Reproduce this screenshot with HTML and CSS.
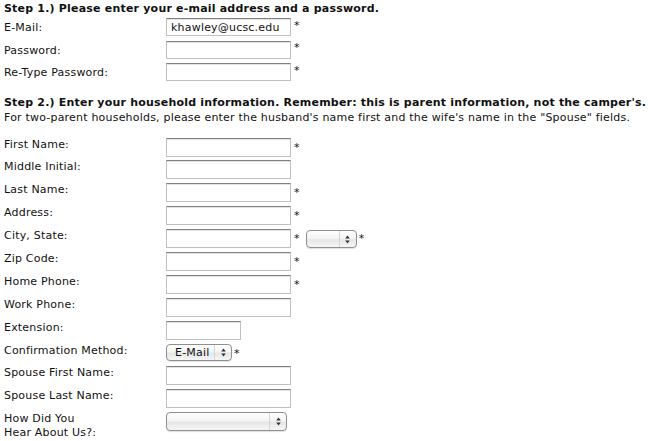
FILE: index.html
```html
<!DOCTYPE html>
<html>
<head>
<meta charset="utf-8">
<link rel="stylesheet" href="styles.css">
</head>
<body>
<form class="form">
  <div class="step1">
    <h2 class="heading">Step 1.) Please enter your e-mail address and a password.</h2>
    <div class="row1"><span class="label">E-Mail:</span><span class="field"><input class="text" type="text" value="khawley@ucsc.edu"></span><span class="req">*</span></div>
    <div class="row1"><span class="label">Password:</span><span class="field"><input class="text" type="password"></span><span class="req">*</span></div>
    <div class="row1"><span class="label">Re-Type Password:</span><span class="field"><input class="text" type="password"></span><span class="req">*</span></div>
  </div>
  <div class="step2">
    <h2 class="heading">Step 2.) Enter your household information. Remember: this is parent information, not the camper's.</h2>
    <p class="note">For two-parent households, please enter the husband's name first and the wife's name in the "Spouse" fields.</p>
    <div class="rows">
      <div class="row2"><span class="label">First Name:</span><input class="text t2" type="text"><span class="req">*</span></div>
      <div class="row2"><span class="label">Middle Initial:</span><input class="text t2" type="text"></div>
      <div class="row2"><span class="label">Last Name:</span><input class="text t2" type="text"><span class="req">*</span></div>
      <div class="row2"><span class="label">Address:</span><input class="text t2" type="text"><span class="req">*</span></div>
      <div class="row2"><span class="label">City, State:</span><input class="text t2" type="text"><span class="req">*</span>
        <span class="select state"><span class="sel-text"></span><span class="sel-arrows"><svg width="5" height="9" viewBox="0 0 5 9"><path d="M2.5 0.5 L4.8 3.5 L0.2 3.5 Z M2.5 8.5 L4.8 5.5 L0.2 5.5 Z" fill="#333"/></svg></span></span><span class="req req-after">*</span></div>
      <div class="row2"><span class="label">Zip Code:</span><input class="text t2" type="text"><span class="req">*</span></div>
      <div class="row2"><span class="label">Home Phone:</span><input class="text t2" type="text"><span class="req">*</span></div>
      <div class="row2"><span class="label">Work Phone:</span><input class="text t2" type="text"></div>
      <div class="row2"><span class="label">Extension:</span><input class="text t2 short" type="text"></div>
      <div class="row2"><span class="label">Confirmation Method:</span>
        <span class="select confirm"><span class="sel-text">E-Mail</span><span class="sel-arrows"><svg width="5" height="9" viewBox="0 0 5 9"><path d="M2.5 0.5 L4.8 3.5 L0.2 3.5 Z M2.5 8.5 L4.8 5.5 L0.2 5.5 Z" fill="#333"/></svg></span></span><span class="req req-after">*</span></div>
      <div class="row2"><span class="label">Spouse First Name:</span><input class="text t2" type="text"></div>
      <div class="row2"><span class="label">Spouse Last Name:</span><input class="text t2" type="text"></div>
      <div class="row2 row-last"><span class="label">How Did You<br>Hear About Us?:</span>
        <span class="select hear"><span class="sel-text"></span><span class="sel-arrows"><svg width="5" height="9" viewBox="0 0 5 9"><path d="M2.5 0.5 L4.8 3.5 L0.2 3.5 Z M2.5 8.5 L4.8 5.5 L0.2 5.5 Z" fill="#333"/></svg></span></span></div>
    </div>
  </div>
</form>
</body>
</html>
```
FILE: styles.css
```css
html, body {
  margin: 0;
  padding: 0;
  background: #fff;
}
body {
  font-family: "DejaVu Sans", Verdana, sans-serif;
  font-size: 11px;
  line-height: 14px;
  letter-spacing: 0.2px;
  color: #111;
}
.form {
  padding: 1px 4px 12px 4px;
}
.heading {
  margin: 0;
  font-size: 11px;
  line-height: 14px;
  font-weight: bold;
}
.step1 .heading {
  margin-top: 1px;
}
.row1 {
  display: flex;
  align-items: center;
  height: 22.5px;
}
.label {
  width: 162px;
  flex: none;
}
.row1 .label {
  padding-top: 2px;
}
.field {
  display: flex;
}
.text {
  box-sizing: border-box;
  width: 125px;
  height: 18px;
  margin: 0;
  padding: 0 4px;
  border: 1px solid #c0c0c0;
  border-top-color: #808080;
  box-shadow: inset 0 1px 0 #e4e4e4;
  background: #fff;
  font-family: "DejaVu Sans", Verdana, sans-serif;
  font-size: 11px;
  letter-spacing: 0.2px;
  color: #111;
  outline: none;
}
.req {
  margin-left: 3px;
  font-size: 11px;
  line-height: 14px;
}
.row1 .req {
  align-self: center;
  margin-top: -3px;
}
.step2 {
  margin-top: 12px;
}
.note {
  margin: 1px 0 0 0;
}
.rows {
  margin-top: 11px;
}
.row2 {
  display: flex;
  align-items: flex-start;
  height: 22.9px;
}
.row-last {
  height: 30px;
}
.row2 .label {
  padding-top: 2px;
}
.t2 {
  height: 19px;
  margin-top: 2px;
}
.short {
  width: 75px;
}
.row2 .req {
  margin-top: 5px;
}
.select {
  box-sizing: border-box;
  display: flex;
  align-items: stretch;
  margin-top: 2px;
  border: 1px solid #8f8f8f;
  border-radius: 4px;
  background: linear-gradient(#ffffff 0%, #f4f4f4 45%, #e6e6e6 55%, #f6f6f6 100%);
  box-shadow: 0 1px 1px rgba(0,0,0,0.12);
}
.sel-text {
  flex: 1;
  padding-left: 8px;
  line-height: 15px;
  color: #111;
}
.sel-arrows {
  width: 16px;
  flex: none;
  border-left: 1px solid #d4d4d4;
  display: flex;
  align-items: center;
  justify-content: center;
}
.state {
  width: 51px;
  height: 18px;
  margin-left: 6px;
  margin-top: 3px;
}
.confirm {
  width: 66px;
  height: 17px;
  margin-top: 2px;
}
.hear {
  width: 121px;
  height: 19px;
  margin-top: 2px;
}
.req-after {
  margin-left: 2px;
}
```
